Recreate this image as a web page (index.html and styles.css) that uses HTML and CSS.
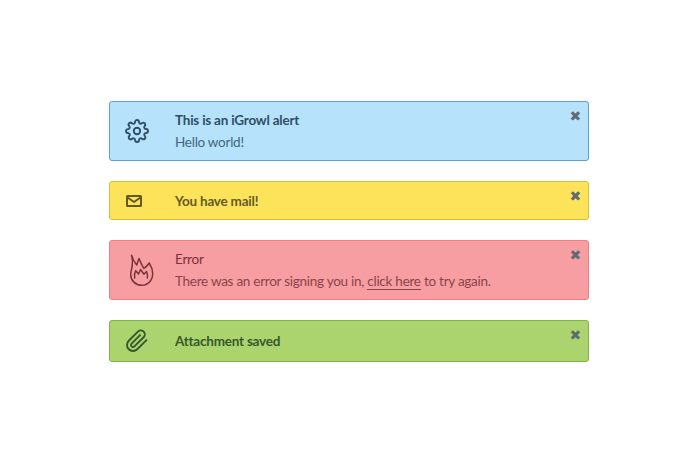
FILE: index.html
```html
<!DOCTYPE html>
<html lang="en">
<head>
    <meta charset="UTF-8">
    <title>iGrowl alerts</title>
    <link rel="stylesheet" href="styles.css">
</head>
<body>
    <main class="alerts">
        <div class="alert alert-info">
            <svg class="alert-icon icon-gear" viewBox="0 0 24 24" fill="none" stroke="currentColor" stroke-width="1.9" stroke-linejoin="round" stroke-linecap="round">
                <circle cx="12" cy="12" r="3.2"/>
                <path d="M19.4 15a1.65 1.65 0 0 0 .33 1.82l.06.06a2 2 0 1 1-2.83 2.83l-.06-.06a1.65 1.65 0 0 0-1.82-.33 1.65 1.65 0 0 0-1 1.51V21a2 2 0 0 1-4 0v-.09A1.65 1.65 0 0 0 9 19.4a1.65 1.65 0 0 0-1.82.33l-.06.06a2 2 0 1 1-2.83-2.83l.06-.06a1.65 1.65 0 0 0 .33-1.82 1.65 1.65 0 0 0-1.51-1H3a2 2 0 0 1 0-4h.09A1.65 1.65 0 0 0 4.6 9a1.65 1.65 0 0 0-.33-1.82l-.06-.06a2 2 0 1 1 2.83-2.83l.06.06a1.65 1.65 0 0 0 1.82.33H9a1.65 1.65 0 0 0 1-1.51V3a2 2 0 0 1 4 0v.09a1.65 1.65 0 0 0 1 1.51 1.65 1.65 0 0 0 1.82-.33l.06-.06a2 2 0 1 1 2.83 2.83l-.06.06a1.65 1.65 0 0 0-.33 1.82V9a1.65 1.65 0 0 0 1.51 1H21a2 2 0 0 1 0 4h-.09a1.65 1.65 0 0 0-1.51 1z"/>
            </svg>
            <div class="alert-body">
                <h4 class="alert-title">This is an iGrowl alert</h4>
                <p class="alert-message">Hello world!</p>
            </div>
            <span class="alert-close">&#10006;</span>
        </div>

        <div class="alert alert-notice">
            <svg class="alert-icon icon-mail" viewBox="0 0 16 12" fill="none" stroke="currentColor" stroke-width="2" stroke-linejoin="round">
                <rect x="1" y="1" width="14" height="10" rx="0.5"/>
                <path d="M1.500 2.500 8 7l6.500-4.500"/>
            </svg>
            <div class="alert-body">
                <h4 class="alert-title">You have mail!</h4>
            </div>
            <span class="alert-close">&#10006;</span>
        </div>

        <div class="alert alert-error">
            <svg class="alert-icon icon-fire" viewBox="0 0 30 40" fill="none" stroke="currentColor" stroke-width="1.5" stroke-linejoin="round" stroke-linecap="round">
                <path d="M6.700 5.300c.8 4 2.800 7 5 9.700.6-2.200 1.500-4.200 2.300-6.500 1.500 4 2.800 6.500 4.800 10 1.800-1.200 4-3.200 5.400-5.500 2.300 3.500 3.500 7 3.500 10.500 0 6.800-4.800 11.800-11 11.800S5.700 30.500 5.700 24.500c0-3 .9-5 1.500-8.500.5-3.500.4-7-.5-10.700z"/>
                <path d="M9.700 28c-.7-2.500-.2-5 1-7.300l2.800 3.300 2-4.500 3.500 4.700 2.500-2.700c1 2 1.300 4 .8 6.500"/>
            </svg>
            <div class="alert-body">
                <h4 class="alert-title">Error</h4>
                <p class="alert-message">There was an error signing you in, <a href="#">click here</a> to try again.</p>
            </div>
            <span class="alert-close">&#10006;</span>
        </div>

        <div class="alert alert-success">
            <svg class="alert-icon icon-clip" viewBox="0 0 24 24" fill="none" stroke="currentColor" stroke-width="1.9" stroke-linecap="round" stroke-linejoin="round">
                <path d="M21.440 11.050l-9.190 9.190a6 6 0 0 1-8.490-8.490l9.190-9.190a4 4 0 0 1 5.660 5.660l-9.200 9.190a2 2 0 0 1-2.830-2.830l8.490-8.480"/>
            </svg>
            <div class="alert-body">
                <h4 class="alert-title">Attachment saved</h4>
            </div>
            <span class="alert-close">&#10006;</span>
        </div>
    </main>
</body>
</html>
```

FILE: styles.css
```css
body {
    margin: 0;
    font-family: 'Lato', sans-serif;
    font-size: 13.5px;
    letter-spacing: -0.22px;
    background-color: #FFFFFF;
}

.alerts {
    display: flex;
    flex-direction: column;
    gap: 20px;
    width: 480px;
    margin-left: 109px;
    padding-top: 101px;
}

.alert {
    position: relative;
    display: grid;
    grid-template-columns: 65px 1fr;
    align-items: center;
    box-sizing: border-box;
    height: 60px;
    border: 1px solid;
    border-radius: 3px;
}

.alert-info {
    background-color: #B6E2FC;
    border-color: #5B9FDB;
    color: #2F4F66;
}

.alert-notice {
    height: 39px;
    background-color: #FDE359;
    border-color: #D9BC38;
    color: #645A26;
}

.alert-error {
    background-color: #F79EA2;
    border-color: #F07F85;
    color: #7A3239;
}

.alert-success {
    height: 42px;
    background-color: #ABD46F;
    border-color: #7FB04A;
    color: #37582C;
}

.alert-icon {
    display: block;
}

.icon-gear {
    width: 24px;
    height: 24px;
    margin-left: 15px;
}

.icon-mail {
    width: 16px;
    height: 12px;
    margin-left: 16px;
}

.icon-fire {
    width: 30px;
    height: 40px;
    margin-left: 15px;
}

.icon-clip {
    width: 24px;
    height: 24px;
    margin-left: 15px;
}

.alert-title {
    margin: 0;
    font-size: inherit;
    font-weight: 700;
    line-height: 20px;
}

.alert-error .alert-title {
    font-weight: 400;
}

.alert-message {
    margin: 2px 0 0;
    line-height: 20px;
    letter-spacing: -0.26px;
    opacity: 0.85;
}

.alert-message a {
    color: inherit;
    text-decoration: none;
    border-bottom: 1px solid #7A3239;
}

.alert-close {
    position: absolute;
    top: 6px;
    right: 7px;
    font-family: 'DejaVu Sans', sans-serif;
    font-size: 14px;
    line-height: 16px;
    color: #5F6B70;
}
```
